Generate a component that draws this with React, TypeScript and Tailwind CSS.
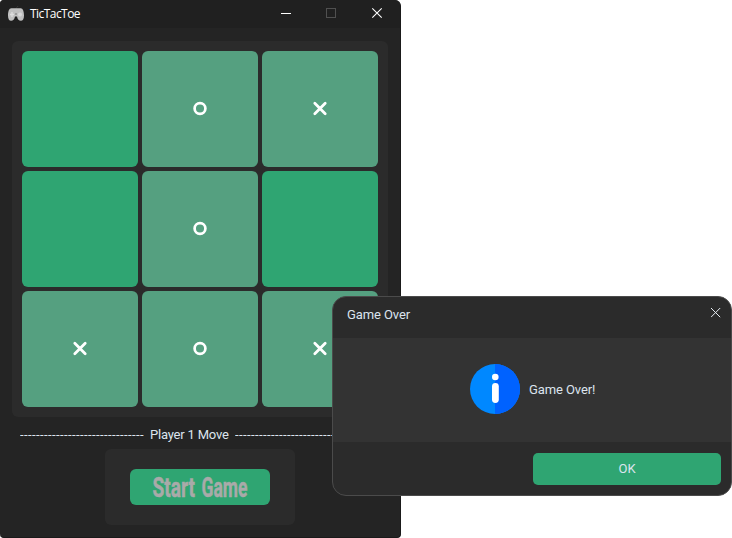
type Mark = "" | "o" | "x";

const board: Mark[] = ["", "o", "x", "", "o", "", "x", "o", "x"];

function MarkIcon({ mark }: { mark: Mark }) {
  if (mark === "") return null;
  return (
    <svg width="16" height="16" viewBox="0 0 16 16" fill="none" stroke="#fff">
      {mark === "o" ? (
        <circle cx="8" cy="7.5" r="5.4" strokeWidth="2.7" />
      ) : (
        <path d="M2.8 2.3 13.2 12.7M13.2 2.3 2.8 12.7" strokeWidth="2.8" strokeLinecap="round" />
      )}
    </svg>
  );
}

function GamepadIcon() {
  return (
    <svg className="ml-2" width="16" height="16" viewBox="0 0 16 16">
      <path d="M8 3C8 1.2 9.5 1.6 10 0" stroke="#3b3b3b" fill="none" />
      <path
        d="M3.3 2.2h9.4c2.2 0 3.3 3.2 3.3 7.2 0 3.6-1.2 5.4-3.1 5.4-2 0-3.3-1.3-3.9-4.3H7c-.6 3-1.9 4.3-3.9 4.3C1.2 14.8 0 13 0 9.4c0-4 1.1-7.2 3.3-7.2Z"
        fill="#c0c0c0"
      />
      <path d="M4 6v5M2 8.5h4" stroke="#dedede" strokeWidth="1.3" />
      <circle cx="12" cy="8.5" r="2" fill="#d8d8d8" />
      <path d="M7 8h2" stroke="#777" />
    </svg>
  );
}

function GameWindow() {
  return (
    <main className="flex h-[538px] w-[401px] flex-col items-center overflow-hidden rounded-tr-[6px] rounded-b-[4px] rounded-tl-[4px] border-r border-b border-[#1a1a1a] bg-[#242424]">
      <header className="flex h-7 w-full shrink-0 items-center bg-[#202020]">
        <GamepadIcon />
        <span className="ml-1.5 font-['Open_Sans','Noto_Sans',sans-serif] text-[12px] leading-4 tracking-[-0.55px] text-white">
          TicTacToe
        </span>
        <svg className="ml-auto mr-[17px]" width="103" height="16" viewBox="0 0 103 16" fill="none">
          <path d="M1 7.5h10" stroke="#fff" />
          <rect x="46.5" y="2.5" width="9" height="9" stroke="#505050" />
          <path d="m92.3 2.3 9.4 9.4m0-9.4-9.4 9.4" stroke="#fff" strokeWidth="1.1" />
        </svg>
      </header>
      <section className="ml-px mr-px mt-[13px] grid w-[376px] shrink-0 grid-cols-3 gap-1 rounded-[6px] bg-[#2b2b2b] p-2.5">
        {board.map((mark, i) => (
          <button
            key={i}
            className={`flex h-[116px] items-center justify-center rounded-[6px] ${mark ? "bg-[#55a080]" : "bg-[#2fa572]"}`}
          >
            <MarkIcon mark={mark} />
          </button>
        ))}
      </section>
      <p className="mt-[9px] flex h-[17px] w-[360px] shrink-0 items-center gap-1.5 whitespace-pre font-['Roboto',sans-serif] text-[13px] leading-[17px] text-[#dce4ee]">
        <span className="w-[124px] overflow-hidden tracking-[0.41px]">{"-".repeat(31)}</span>
        <span className="w-[79px] tracking-[-0.2px]">Player 1 Move</span>
        <span className="w-[124px] overflow-hidden tracking-[0.41px]">{"-".repeat(31)}</span>
      </p>
      <section className="mt-1.5 flex h-[76px] w-[190px] shrink-0 items-center justify-center rounded-[6px] bg-[#2b2b2b]">
        <button className="flex h-9 w-[140px] items-center justify-center rounded-[6px] bg-[#2fa572]">
          <svg className="overflow-visible" width="96" height="36" viewBox="0 0 96 36">
            <g
              transform="scale(0.5 1)"
              className="fill-[#a9aaa9] stroke-[#a9aaa9] font-['Roboto',sans-serif] text-[28px] font-bold"
              strokeWidth="0.5"
            >
              <text x="1" y="28.5" textLength="85" lengthAdjust="spacingAndGlyphs">
                Start
              </text>
              <text x="99" y="28.5" textLength="92" lengthAdjust="spacingAndGlyphs">
                Game
              </text>
            </g>
          </svg>
        </button>
      </section>
    </main>
  );
}

function Dialog() {
  return (
    <div
      role="dialog"
      className="absolute left-[332px] top-[296px] flex h-[200px] w-[400px] flex-col overflow-hidden rounded-[14px] border border-[#4b4b4b] bg-[#2b2b2b] font-['Roboto',sans-serif] text-[13px] tracking-[-0.1px] text-[#dce4ee]"
    >
      <header className="flex h-[41px] shrink-0 justify-between pl-3.5 pr-2.5">
        <h1 className="pt-2.5 leading-4">Game Over</h1>
        <svg className="mt-[11px]" width="10" height="10" viewBox="0 0 10 10">
          <path d="m0 0 9.2 9.2m0-9.2L0 9.2" stroke="#e4eaf0" fill="none" />
        </svg>
      </header>
      <section className="flex h-[104px] shrink-0 items-center gap-[9px] bg-[#333333] pl-[137px]">
        <svg className="mb-0.5" width="50" height="50" viewBox="0 0 50 50">
          <circle cx="25" cy="25" r="25" fill="#0088ff" />
          <path d="M25 0a25 25 0 0 1 0 50Z" fill="#0062ff" />
          <circle cx="25.3" cy="13" r="3.3" fill="#fff" />
          <rect x="22" y="19" width="6.8" height="20" rx="3.4" fill="#fff" />
        </svg>
        <span>Game Over!</span>
      </section>
      <footer className="flex justify-end pr-2.5 pt-[11px]">
        <button className="h-8 w-[188px] rounded-[5px] bg-[#2fa572]">OK</button>
      </footer>
    </div>
  );
}

export default function App() {
  return (
    <div className="relative h-[538px] w-[732px] overflow-hidden bg-white">
      <GameWindow />
      <Dialog />
    </div>
  );
}
